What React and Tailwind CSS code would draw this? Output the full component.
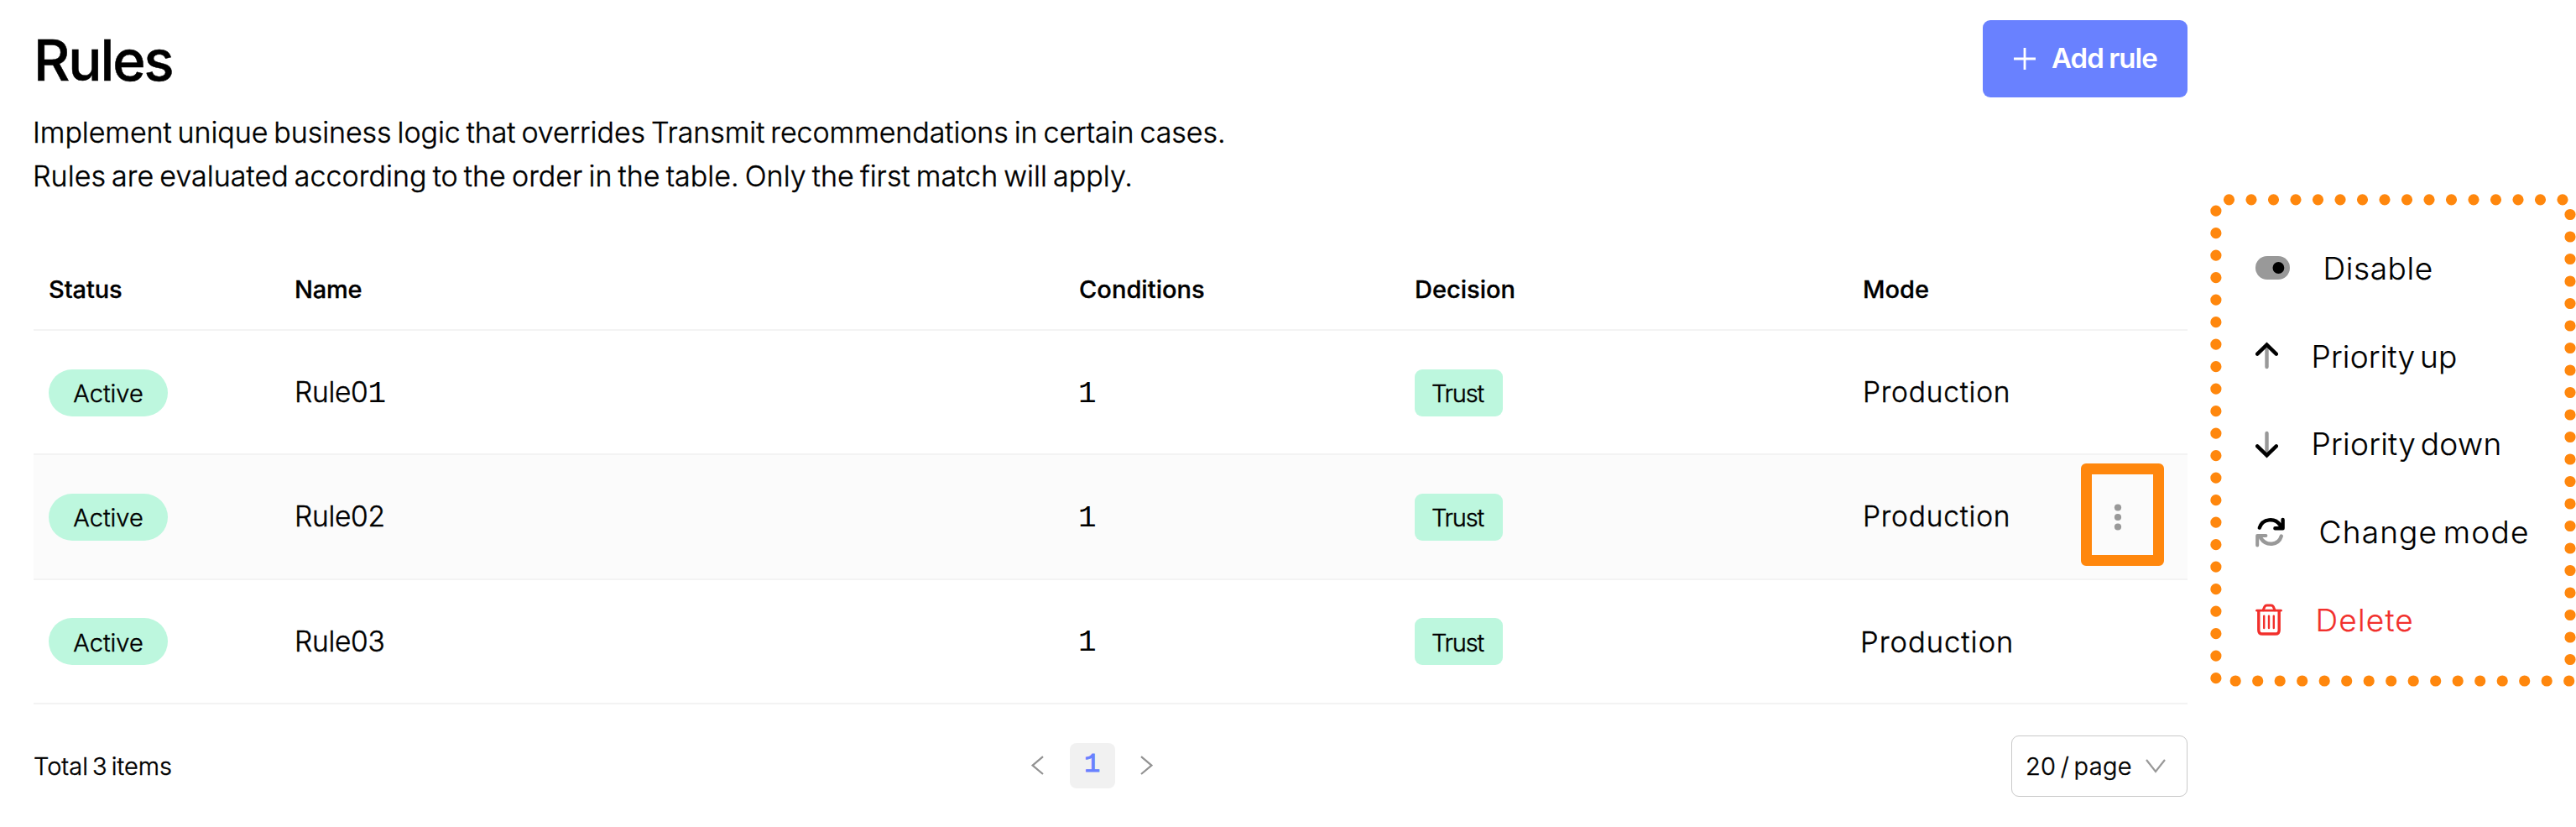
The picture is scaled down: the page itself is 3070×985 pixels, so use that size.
import React from "react";

const GRID = "grid grid-cols-[293px_935px_400px_534px_1fr] items-center pl-[18px]";
const BODY = "font-light [-webkit-text-stroke:0.4px_currentColor]";

function One({ className = "" }) {
  return (
    <span className={`font-['Liberation_Mono',monospace] text-[36px] leading-[0] font-normal tracking-[-3px] [-webkit-text-stroke:0px] ${className}`}>
      1
    </span>
  );
}

function Pill() {
  return (
    <span className={`flex h-14 w-[142px] items-center justify-center rounded-full bg-[#bdf7de] pt-0.5 text-[29px] leading-none ${BODY}`}>
      Active
    </span>
  );
}

function Decision() {
  return (
    <span className={`flex h-14 w-[105px] items-center rounded-[9px] bg-[#bdf7de] pt-0.5 pl-5 text-[29px] leading-none tracking-[-1.2px] ${BODY}`}>
      Trust
    </span>
  );
}

function Kebab() {
  return (
    <button className="-mt-[5px] mr-7 h-[122px] w-[99px] rounded-md border-[13px] border-[#ff870d]">
      <svg viewBox="0 0 73 96" className="block h-[96px] w-[73px]" fill="#999999">
        <circle cx="31" cy="39.5" r="4.1" />
        <circle cx="31" cy="51" r="4.1" />
        <circle cx="31" cy="62.5" r="4.1" />
      </svg>
    </button>
  );
}

const rows = [
  { id: "Rule01", name: <>Rule0<One /></>, box: "h-[148px] pt-px", mode: "text-[33.5px] tracking-[0.8px]" },
  { id: "Rule02", name: "Rule02", box: "h-[149px] bg-[#fbfbfb]", mode: "text-[33.5px] tracking-[0.8px]", menu: true },
  { id: "Rule03", name: "Rule03", box: "h-[148px]", mode: "-ml-[3px] pt-[3px] text-[34.5px] tracking-[1px]" },
];

function RulesTable() {
  return (
    <div className="mt-[61px]">
      <div className={`${GRID} h-[97px] border-b-2 border-[#f3f3f3] text-[29px] font-medium [-webkit-text-stroke:0.3px_currentColor]`}>
        <span className="tracking-[-0.1px]">Status</span>
        <span className="tracking-[-0.2px]">Name</span>
        <span className="tracking-[0.05px]">Conditions</span>
        <span>Decision</span>
        <span>Mode</span>
      </div>
      {rows.map((r) => (
        <div key={r.id} className={`${GRID} border-b-2 border-[#f3f3f3] ${r.box}`}>
          <Pill />
          <span className={`pt-px text-[33.5px] leading-none tracking-[-0.3px] ${BODY}`}>{r.name}</span>
          <span className="text-[33.5px] leading-none"><One className="-ml-[1px]" /></span>
          <Decision />
          <div className="flex items-center justify-between">
            <span className={`leading-none ${BODY} ${r.mode}`}>Production</span>
            {r.menu && <Kebab />}
          </div>
        </div>
      ))}
    </div>
  );
}

function Footer() {
  return (
    <div className="mt-[37px] grid h-[73px] grid-cols-[1189px_145px_1fr] items-center">
      <span className={`text-[29px] tracking-[0px] [word-spacing:-3px] ${BODY}`}>Total 3 items</span>
      <div className="-mt-[2px] flex items-center justify-between">
        <svg viewBox="0 0 15 24" className="h-6 w-[15px]" fill="none" stroke="#929292" strokeWidth="2.2">
          <path d="M14 1.2 L1.6 11.6 L14 22" />
        </svg>
        <span className="flex h-[54px] w-[54px] items-center justify-center rounded-lg bg-[#f1f1f1] pb-px font-['Liberation_Mono',monospace] text-[32px] leading-none font-normal text-[#6981ff] [-webkit-text-stroke:1px_currentColor]">
          1
        </span>
        <svg viewBox="0 0 15 24" className="h-6 w-[15px]" fill="none" stroke="#929292" strokeWidth="2.2">
          <path d="M1 1.2 L13.4 11.6 L1 22" />
        </svg>
      </div>
      <button className={`flex h-[73px] w-[210px] items-center justify-between justify-self-end rounded-[9px] border-[1.5px] border-[#c9c9c9] pr-[25px] pl-4 text-[29px] ${BODY}`}>
        <span className="whitespace-nowrap tracking-[0.3px] [word-spacing:-3px]">20 / page</span>
        <svg viewBox="0 0 24 17" className="h-[17px] w-6" fill="none" stroke="#999999" strokeWidth="2.2">
          <path d="M1 1 L12 15 L23 1" />
        </svg>
      </button>
    </div>
  );
}

const ToggleIcon = (
  <svg viewBox="0 0 41 28" className="h-7 w-[41px]">
    <rect width="41" height="28" rx="14" fill="#999999" />
    <circle cx="27.4" cy="14" r="6.9" fill="#000" />
  </svg>
);
const UpIcon = (
  <svg viewBox="0 0 27 34" className="h-[34px] w-[27px]" fill="none" strokeWidth="4.4" strokeLinecap="round">
    <path d="M13.5 8 V30" stroke="#999999" />
    <path d="M2.2 14.6 L13.5 3.6 L24.8 14.6" stroke="#000" />
  </svg>
);
const DownIcon = (
  <svg viewBox="0 0 27 34" className="h-[34px] w-[27px]" fill="none" strokeWidth="4.4" strokeLinecap="round">
    <path d="M13.5 4 V26" stroke="#999999" />
    <path d="M2.2 19.4 L13.5 30.4 L24.8 19.4" stroke="#000" />
  </svg>
);
const RefreshIcon = (
  <svg viewBox="0 0 36 36" className="h-9 w-9" fill="none" strokeWidth="4.4" strokeLinecap="round" strokeLinejoin="round">
    <path d="M4.8 12.6 C8.5 1.6 23 0 29.6 9.6" stroke="#000" />
    <path d="M32.6 3 V13.2 H23.4" stroke="#000" />
    <path d="M27.4 9 L32.6 13.2 V8.4 Z" fill="#000" stroke="#000" strokeWidth="2" />
    <path d="M30.8 22.6 C27.4 33.6 13 35.2 6.2 24.8" stroke="#999999" />
    <path d="M2.2 33.4 V22 H12.4" stroke="#999999" strokeWidth="4" />
  </svg>
);
const TrashIcon = (
  <svg viewBox="0 0 32 38" className="h-[38px] w-8" fill="none" stroke="#f2302c" strokeWidth="3" strokeLinecap="round" strokeLinejoin="round">
    <path d="M1.6 8.2 H30.4" strokeWidth="2.8" />
    <path d="M9.2 7.6 L11 3.4 Q11.8 2 13.4 2 H18.8 Q20.4 2 21.2 3.4 L23 7.6" />
    <path d="M3.8 8.6 V31.4 Q3.8 36 8.2 36 H23.8 Q28.2 36 28.2 31.4 V8.6" strokeWidth="3.4" />
    <path d="M10.2 14.6 V29 M16 14.6 V29 M21.8 14.6 V29" strokeWidth="2.4" />
  </svg>
);

const actions = [
  { label: "Disable", icon: ToggleIcon, cls: "tracking-[0.6px]" },
  { label: "Priority up", icon: UpIcon, cls: "tracking-[0.2px] [word-spacing:-5px]" },
  { label: "Priority down", icon: DownIcon, cls: "tracking-[0.3px] [word-spacing:-5px]" },
  { label: "Change mode", icon: RefreshIcon, cls: "tracking-[1.2px] [word-spacing:-5px]" },
  { label: "Delete", icon: TrashIcon, cls: "tracking-[1.2px] text-[#f2302c]" },
];

function ActionMenu() {
  return (
    <aside className="relative mt-[231px] ml-[27px] h-[587px] w-[436px] pt-9 pl-[53.5px]">
      <svg
        viewBox="0 0 436 587"
        className="pointer-events-none absolute top-0 left-0 h-[587px] w-[436px]"
        stroke="#ff870d"
        strokeWidth="13.2"
        strokeLinecap="round"
        strokeDasharray="0 26.5"
      >
        <path d="M22.5 6.8 H421" />
        <path d="M6.9 20.2 V578" />
        <path d="M429 24.5 V556" />
        <path d="M30.2 580 H428.6" />
      </svg>
      {actions.map((a) => (
        <div key={a.label} className="flex h-[104.75px] items-center gap-10">
          {a.icon}
          <span className={`text-[37px] leading-none font-light whitespace-nowrap [-webkit-text-stroke:0.2px_currentColor] ${a.cls}`}>
            {a.label}
          </span>
        </div>
      ))}
    </aside>
  );
}

export default function App() {
  return (
    <div className="flex h-[985px] w-[3070px] items-start overflow-hidden bg-white font-['Inter',sans-serif] text-black">
      <main className="ml-10 w-[2567px] shrink-0 pt-6">
        <div className="flex h-[92px] items-center justify-between">
          <h1 className="pt-[3px] text-[67px] leading-none font-medium tracking-[-2.1px] [-webkit-text-stroke:0.5px_currentColor]">Rules</h1>
          <button className="flex h-[92px] w-[244px] items-center gap-[19px] rounded-[9px] bg-[#6981ff] pl-[37px] text-[33px] font-semibold text-white">
            <svg viewBox="0 0 26 26" className="h-[26px] w-[26px] shrink-0" stroke="#fff" strokeWidth="2.8">
              <path d="M13 0 V26 M0 13 H26" />
            </svg>
            <span className="whitespace-nowrap tracking-[-0.95px] [word-spacing:-1px]">Add rule</span>
          </button>
        </div>
        <p className={`mt-4 -ml-px text-[34px] leading-[52px] whitespace-nowrap [word-spacing:-2.5px] ${BODY}`}>
          <span className="block tracking-[-0.07px]">
            Implement unique business logic that overrides Transmit recommendations in certain cases.
          </span>
          <span className="block tracking-[0.04px]">
            Rules are evaluated according to the order in the table. Only the first match will apply.
          </span>
        </p>
        <RulesTable />
        <Footer />
      </main>
      <ActionMenu />
    </div>
  );
}
